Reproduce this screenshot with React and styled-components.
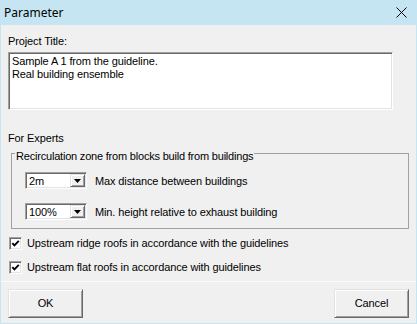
import React from 'react';
import styled, { createGlobalStyle } from 'styled-components';

const GlobalStyle = createGlobalStyle`
  html, body {
    margin: 0;
    padding: 0;
    background: #ffffff;
  }
  body {
    font-family: "Liberation Sans", Arial, sans-serif;
    font-size: 11px;
    letter-spacing: -0.12px;
    color: #000;
  }
`;

const Window = styled.div`
  width: 417px;
  height: 324px;
  box-sizing: border-box;
  display: flex;
  flex-direction: column;
  background: #f0f0f0;
  border: 1px solid #c6e5f2;
  border-top: none;
`;

const TitleBar = styled.div`
  height: 25px;
  flex: none;
  display: flex;
  align-items: center;
  justify-content: space-between;
  padding: 0 9px 0 3px;
  background: #c6e5f2;
`;

const TitleText = styled.span`
  font-family: "Noto Sans", "Open Sans", sans-serif;
  font-size: 12px;
  letter-spacing: 0;
  line-height: 16px;
  padding-top: 1px;
`;

const Content = styled.div`
  flex: 1;
  display: flex;
  flex-direction: column;
  align-items: flex-start;
  padding-left: 7px;
`;

const Label = styled.div`
  line-height: 13px;
  margin-top: ${p => p.$top || 0}px;
`;

const TitleInput = styled.textarea`
  width: 385px;
  height: 58px;
  margin: 4px 0 0;
  box-sizing: border-box;
  padding: 2px 3px;
  font: inherit;
  letter-spacing: inherit;
  line-height: 13px;
  color: #000;
  background: #fff;
  resize: none;
  overflow: hidden;
  outline: none;
  border: 1px solid;
  border-color: #a0a0a0 #ffffff #ffffff #a0a0a0;
  box-shadow: inset 1px 1px 0 #696969, inset -1px -1px 0 #e3e3e3;
`;

const Group = styled.div`
  margin: 8px 0 0 3px;
  width: 398px;
  box-sizing: border-box;
  padding-bottom: 8px;
  border: 1px solid #a0a0a0;
  display: flex;
  flex-direction: column;
  align-items: flex-start;
  gap: 14px;
`;

/* caption sits over the group's top border line */
const GroupTitle = styled.div`
  margin: -4px 0 -5px 3px;
  padding: 0 1px;
  background: #f0f0f0;
  line-height: 13px;
  letter-spacing: -0.2px;
`;

const OptionRow = styled.div`
  display: flex;
  align-items: center;
  gap: 8px;
  padding-left: 13px;
`;

const Combo = styled.div`
  width: 62px;
  height: 17px;
  box-sizing: border-box;
  display: flex;
  background: #fff;
  border: 1px solid;
  border-color: #a0a0a0 #ffffff #ffffff #a0a0a0;
  box-shadow: inset 1px 1px 0 #696969, inset -1px -1px 0 #e3e3e3;
  padding: 1px;
`;

const ComboValue = styled.span`
  flex: 1;
  padding: 1px 0 0 2px;
  line-height: 13px;
`;

const DropButton = styled.span`
  width: 15px;
  box-sizing: border-box;
  display: flex;
  align-items: center;
  justify-content: center;
  background: #f0f0f0;
  border: 1px solid;
  border-color: #e3e3e3 #696969 #696969 #e3e3e3;
  box-shadow: inset 1px 1px 0 #ffffff, inset -1px -1px 0 #a0a0a0;
`;

const OptionText = styled.span`
  line-height: 13px;
  padding-top: 1px;
`;

const Checks = styled.div`
  display: flex;
  flex-direction: column;
  gap: 11px;
  margin: 8px 0 0 1px;
`;

const CheckRow = styled.label`
  display: flex;
  align-items: center;
  gap: 5px;
  line-height: 13px;
`;

const CheckBox = styled.span`
  width: 13px;
  height: 13px;
  box-sizing: border-box;
  display: flex;
  background: #fff;
  border: 1px solid;
  border-color: #a0a0a0 #ffffff #ffffff #a0a0a0;
  box-shadow: inset 1px 1px 0 #696969, inset -1px -1px 0 #e3e3e3;
`;

const Footer = styled.div`
  flex: none;
  display: flex;
  justify-content: space-between;
  padding: 7px 7px 5px 7px;
  border-top: 1px solid #fbfbfb;
`;

const Button = styled.button`
  width: 75px;
  height: 29px;
  box-sizing: border-box;
  font: inherit;
  letter-spacing: inherit;
  color: #000;
  background: #f0f0f0;
  border: 1px solid;
  border-color: #e3e3e3 #696969 #696969 #e3e3e3;
  box-shadow: inset 1px 1px 0 #ffffff, inset -1px -1px 0 #a0a0a0;
  padding: 0;
  line-height: 13px;
`;

const CloseIcon = () => (
  <svg width="11" height="11" viewBox="0 0 11 11">
    <path d="M0.5 0.5 L10.5 10.5 M10.5 0.5 L0.5 10.5" stroke="#000" strokeWidth="1" fill="none" />
  </svg>
);

const Arrow = () => (
  <svg width="7" height="4" viewBox="0 0 7 4">
    <path d="M0 0 H7 L3.5 4 Z" fill="#000" />
  </svg>
);

const Check = () => (
  <svg width="11" height="11" viewBox="0 0 11 11">
    <path d="M2.3 5.2 L4.4 7.4 L8.8 2.8" stroke="#000" strokeWidth="1.9" fill="none" />
  </svg>
);

const options = [
  { value: '2m', text: 'Max distance between buildings' },
  { value: '100%', text: 'Min. height relative to exhaust building' },
];

const checks = [
  'Upstream ridge roofs in accordance with the guidelines',
  'Upstream flat roofs in accordance with guidelines',
];

export default function App() {
  return (
    <>
      <GlobalStyle />
      <Window>
        <TitleBar>
          <TitleText>Parameter</TitleText>
          <CloseIcon />
        </TitleBar>
        <Content>
          <Label $top={10}>Project Title:</Label>
          <TitleInput
            readOnly
            defaultValue={'Sample A 1 from the guideline.\nReal building ensemble'}
          />
          <Label $top={22}>For Experts</Label>
          <Group>
            <GroupTitle>Recirculation zone from blocks build from buildings</GroupTitle>
            {options.map(o => (
              <OptionRow key={o.value}>
                <Combo>
                  <ComboValue>{o.value}</ComboValue>
                  <DropButton><Arrow /></DropButton>
                </Combo>
                <OptionText>{o.text}</OptionText>
              </OptionRow>
            ))}
          </Group>
          <Checks>
            {checks.map(c => (
              <CheckRow key={c}>
                <CheckBox><Check /></CheckBox>
                {c}
              </CheckRow>
            ))}
          </Checks>
        </Content>
        <Footer>
          <Button>OK</Button>
          <Button>Cancel</Button>
        </Footer>
      </Window>
    </>
  );
}
